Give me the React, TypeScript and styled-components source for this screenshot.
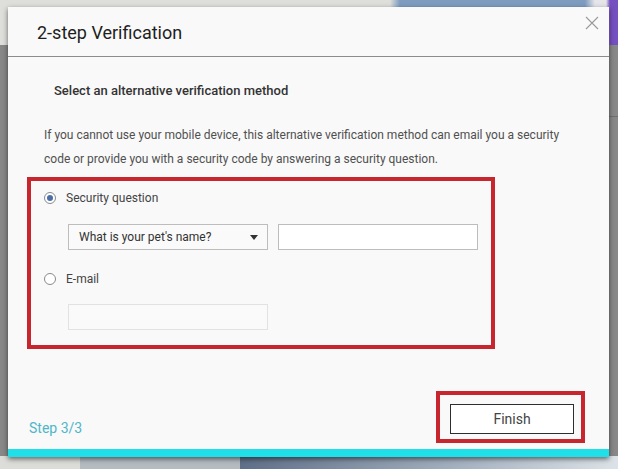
import React from "react";
import styled, { createGlobalStyle } from "styled-components";

const Global = createGlobalStyle`
  html, body { margin: 0; padding: 0; }
  body { font-family: Roboto, "Liberation Sans", Arial, sans-serif; }
  * { box-sizing: border-box; }
`;

const Page = styled.div`
  width: 618px;
  height: 469px;
  overflow: hidden;
  padding: 7px 0 0 8px;
  background:
    linear-gradient(to right, #dcdcd8 0 80px, #b4bcc2 80px 240px, #5f6f88 240px, #9aa8b8 430px, #dce3e8 618px) left bottom / 100% 13px no-repeat,
    linear-gradient(to right, #dedfdb 0 390px, #7e9cc0 400px 585px, #e6e6ea 595px 606px, #7550c0 610px) left top / 100% 45px no-repeat,
    linear-gradient(to bottom, transparent 116px, #6f6f6f 116px 117px, transparent 117px) right top / 10px 100% no-repeat,
    #888888;
`;

const Dialog = styled.div`
  width: 601px;
  height: 450px;
  background: #f9f9f9;
  display: flex;
  flex-direction: column;
  box-shadow: 0 2px 5px rgba(0, 0, 0, 0.55);
`;

const Header = styled.div`
  height: 50px;
  flex: none;
  display: flex;
  align-items: center;
  justify-content: space-between;
  padding: 0 10px 0 29px;
  border-bottom: 1px solid #8c8c8c;
`;

const Title = styled.h1`
  margin: 2px 0 0;
  font-size: 18px;
  font-weight: 400;
  color: #1e1e1e;
`;

const Close = styled.button`
  align-self: flex-start;
  margin-top: 9px;
  width: 14px;
  height: 14px;
  padding: 0;
  border: none;
  background: none;
  display: flex;
  cursor: pointer;
`;

const Body = styled.div`
  padding: 25px 0 0 36px;
  display: flex;
  flex-direction: column;
`;

const Subtitle = styled.h2`
  margin: 0 0 0 10px;
  font-size: 13px;
  font-weight: 500;
  color: #333;
  line-height: 18px;
`;

const Paragraph = styled.p`
  margin: 23px 0 0;
  width: 540px;
  font-size: 12px;
  line-height: 24px;
  color: #505050;
`;

const Highlight = styled.div`
  border: 4px solid #c8262f;
`;

const Fields = styled(Highlight)`
  margin: 6px 0 0 -17px;
  width: 468px;
  height: 172px;
  padding: 9px 0 0 13px;
  display: flex;
  flex-direction: column;
`;

const RadioRow = styled.label`
  display: flex;
  align-items: center;
  gap: 10px;
  height: 16px;
  font-size: 12px;
  color: #444;
`;

const Radio = styled.span<{ $checked?: boolean }>`
  width: 12px;
  height: 12px;
  border-radius: 50%;
  border: 1px solid #8a8a8a;
  background: #fff;
  display: flex;
  align-items: center;
  justify-content: center;
  &::after {
    content: "";
    width: 6px;
    height: 6px;
    border-radius: 50%;
    background: ${(p) => (p.$checked ? "#4a6ea6" : "transparent")};
  }
`;

const FieldRow = styled.div<{ $top: number; $bottom: number }>`
  display: flex;
  gap: 10px;
  margin: ${(p) => p.$top}px 0 ${(p) => p.$bottom}px 24px;
`;

const Select = styled.div`
  width: 200px;
  height: 26px;
  border: 1px solid #bdbdbd;
  background: #fafafa;
  display: flex;
  align-items: center;
  justify-content: space-between;
  padding: 0 9px 0 10px;
  font-size: 12px;
  color: #333;
`;

const Caret = styled.span`
  width: 0;
  height: 0;
  border-left: 4px solid transparent;
  border-right: 4px solid transparent;
  border-top: 5px solid #333;
`;

const Input = styled.div<{ $muted?: boolean }>`
  width: 200px;
  height: 26px;
  border: 1px solid ${(p) => (p.$muted ? "#e2e2e2" : "#bdbdbd")};
  background: ${(p) => (p.$muted ? "#fafafa" : "#fff")};
`;

const Footer = styled.div`
  margin-top: auto;
  display: flex;
  align-items: flex-end;
  justify-content: space-between;
  padding: 0 24px 6px 21px;
`;

const Step = styled.span`
  font-size: 14px;
  color: #4fb6c8;
  margin-bottom: 7px;
`;

const FinishFrame = styled(Highlight)`
  width: 149px;
  height: 52px;
  padding: 9px 0 0 10px;
`;

const Button = styled.button`
  width: 124px;
  height: 30px;
  border: 1px solid #2e2e2e;
  background: #fff;
  font-family: inherit;
  font-size: 14px;
  color: #444;
  padding: 0;
`;

const Bar = styled.div`
  height: 8px;
  flex: none;
  background: #1fe0e8;
`;

export default function App() {
  return (
    <>
      <Global />
      <Page>
        <Dialog>
          <Header>
            <Title>2-step Verification</Title>
            <Close aria-label="Close">
              <svg width="14" height="14" viewBox="0 0 14 14">
                <path d="M1 1 L13 13 M13 1 L1 13" stroke="#9a9a9a" strokeWidth="1.1" />
              </svg>
            </Close>
          </Header>
          <Body>
            <Subtitle>Select an alternative verification method</Subtitle>
            <Paragraph>
              If you cannot use your mobile device, this alternative verification method can email you a security code or provide you with a security code by answering a security question.
            </Paragraph>
            <Fields>
              <RadioRow>
                <Radio $checked />
                Security question
              </RadioRow>
              <FieldRow $top={18} $bottom={21}>
                <Select>
                  What is your pet's name?
                  <Caret />
                </Select>
                <Input />
              </FieldRow>
              <RadioRow>
                <Radio />
                E-mail
              </RadioRow>
              <FieldRow $top={17} $bottom={0}>
                <Input $muted />
              </FieldRow>
            </Fields>
          </Body>
          <Footer>
            <Step>Step 3/3</Step>
            <FinishFrame>
              <Button>Finish</Button>
            </FinishFrame>
          </Footer>
          <Bar />
        </Dialog>
      </Page>
    </>
  );
}
